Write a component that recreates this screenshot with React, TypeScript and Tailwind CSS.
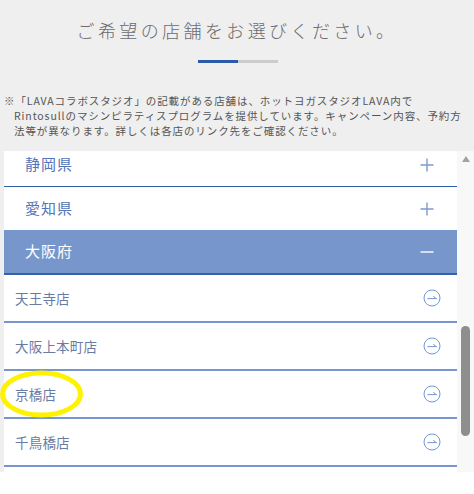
import React from "react";

const prefRows = [
  { name: "静岡県", first: true },
  { name: "愛知県" },
];

const stores = ["天王寺店", "大阪上本町店", "京橋店", "千鳥橋店"];

function Plus() {
  return (
    <svg width="14" height="14" viewBox="0 0 14 14" fill="none">
      <path d="M7 0.5V13.5M0.5 7H13.5" stroke="#7f9bd0" strokeWidth="1.4" />
    </svg>
  );
}

function Minus() {
  return (
    <svg width="14" height="14" viewBox="0 0 14 14" fill="none">
      <path d="M0.5 7H13.5" stroke="#ffffff" strokeWidth="1.4" />
    </svg>
  );
}

function CircleArrow() {
  return (
    <svg width="18" height="18" viewBox="0 0 18 18" fill="none">
      <circle cx="9" cy="9" r="8" stroke="#7097d8" strokeWidth="1" />
      <path d="M4.8 9.6H13.2M10.6 7.6L13.2 9.6" stroke="#7097d8" strokeWidth="1" strokeLinecap="round" />
    </svg>
  );
}

export default function App() {
  return (
    <div
      className="relative w-[474px] h-[494px] overflow-hidden bg-white"
      style={{ fontFamily: '"Noto Sans CJK JP", "Noto Sans", sans-serif' }}
    >
      <div className="flex h-[472px] flex-col bg-[#efefef]">
        <h1 className="pt-[19px] text-center text-[18px] font-light leading-[22px] tracking-[3.4px] text-[#6b6b6b]">
          ご希望の店舗をお選びください。
        </h1>
        <div className="mt-[19px] flex justify-center pl-[2px]">
          <div className="h-[3px] w-[40px] bg-[#2b5ba8]" />
          <div className="h-[3px] w-[40px] bg-[#cccccc]" />
        </div>
        <div className="mt-[30px] pl-[4px] text-[10.5px] leading-[15px] tracking-[0.9px] text-[#555555] whitespace-nowrap">
          <div>※「LAVAコラボスタジオ」の記載がある店舗は、ホットヨガスタジオLAVA内で</div>
          <div className="pl-[10px]">Rintosullのマシンピラティスプログラムを提供しています。キャンペーン内容、予約方</div>
          <div className="pl-[10px]">法等が異なります。詳しくは各店のリンク先をご確認ください。</div>
        </div>
        <div className="ml-[4px] mt-[13px] flex min-h-0 flex-1">
          <div className="w-[453px] overflow-hidden bg-white">
            <div className="-mt-[8px]">
              <div className="flex h-[44px] items-center justify-between border-b border-[#2f5ea8] pl-[21px] pr-[23px]">
                <span className="text-[15px] tracking-[1px] text-[#5575b8]">静岡県</span>
                <Plus />
              </div>
              <div className="flex h-[43px] items-center justify-between pl-[21px] pr-[23px]">
                <span className="text-[15px] tracking-[1px] text-[#5575b8]">愛知県</span>
                <Plus />
              </div>
              <div className="flex h-[45px] items-center justify-between border-b-2 border-[#3562ad] bg-[#7797cc] pl-[21px] pr-[23px]">
                <span className="text-[15px] tracking-[1px] text-white">大阪府</span>
                <Minus />
              </div>
              {stores.map((s) => (
                <div
                  key={s}
                  className="flex h-[48px] items-center justify-between border-b-2 border-[#7797cc] pl-[11px] pr-[16px]"
                >
                  <span className="text-[13.5px] tracking-[0.2px] text-[#6a7ba3]">{s}</span>
                  <CircleArrow />
                </div>
              ))}
            </div>
          </div>
          <div className="flex w-[17px] flex-col items-center bg-[#f8f8f8]">
            <div className="mt-[5px] h-0 w-0 border-x-[4.5px] border-b-[6px] border-x-transparent border-b-[#a3a3a3]" />
            <div className="mt-[164px] h-[110px] w-[9px] rounded-full bg-[#8e8e8e]" />
          </div>
        </div>
      </div>
      <svg className="absolute left-0 top-[370px]" width="90" height="50" viewBox="0 0 90 50" fill="none">
        <ellipse cx="41.5" cy="24" rx="39" ry="21" stroke="#fff200" strokeWidth="5" />
      </svg>
    </div>
  );
}
